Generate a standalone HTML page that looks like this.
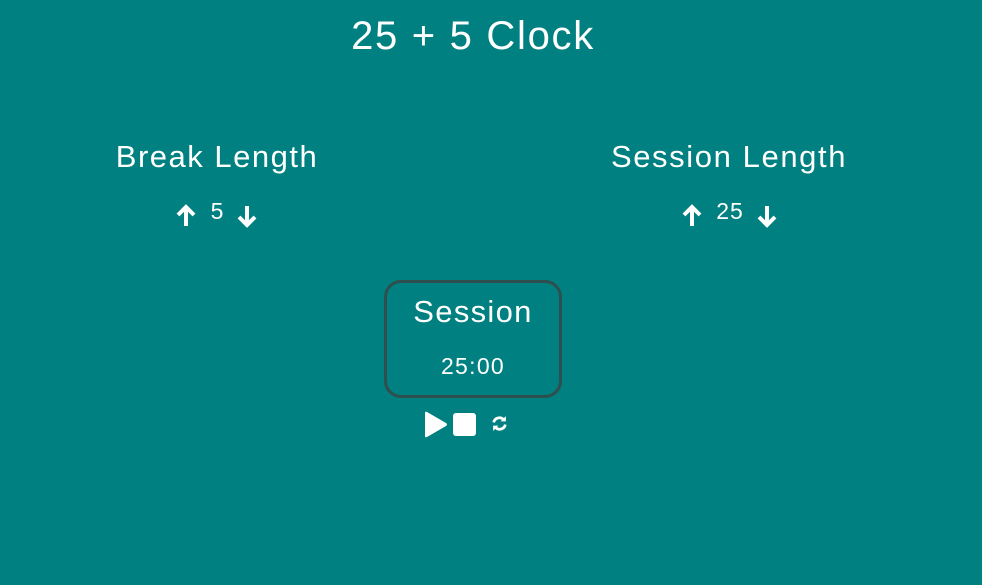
<!DOCTYPE html>
<html><head><style>
body{margin:0;width:982px;height:585px;background:#008080;font-family:"Liberation Sans",sans-serif;color:#fff;position:relative;overflow:hidden}
.t{position:absolute;white-space:nowrap;text-align:center}
svg{position:absolute}
</style></head><body>
<div class="t" style="left:323px;width:300px;top:14px;font-size:40px;letter-spacing:1.7px">25 + 5 Clock</div>
<div class="t" style="left:67px;width:300px;top:139px;font-size:31px;letter-spacing:1.5px">Break Length</div>
<div class="t" style="left:579px;width:300px;top:139px;font-size:31px;letter-spacing:1.6px">Session Length</div>
<svg style="left:175px;top:204px" width="22" height="24" viewBox="0 0 22 24"><path d="M11 22V4M3 11l8-8 8 8" stroke="#fff" stroke-width="4" fill="none"/></svg>
<div class="t" style="left:200px;width:34px;top:198px;font-size:23px">5</div>
<svg style="left:236px;top:204px" width="22" height="24" viewBox="0 0 22 24"><path d="M11 2v18M3 13l8 8 8-8" stroke="#fff" stroke-width="4" fill="none"/></svg>
<svg style="left:681px;top:204px" width="22" height="24" viewBox="0 0 22 24"><path d="M11 22V4M3 11l8-8 8 8" stroke="#fff" stroke-width="4" fill="none"/></svg>
<div class="t" style="left:709px;width:42px;top:198px;font-size:23px;letter-spacing:1px">25</div>
<svg style="left:756px;top:204px" width="22" height="24" viewBox="0 0 22 24"><path d="M11 2v18M3 13l8 8 8-8" stroke="#fff" stroke-width="4" fill="none"/></svg>
<div style="position:absolute;left:384px;top:280px;width:172px;height:112px;border:3px solid #2f4f4f;border-radius:17px"></div>
<div class="t" style="left:373px;width:200px;top:294px;font-size:31px;letter-spacing:1.3px">Session</div>
<div class="t" style="left:373px;width:200px;top:353px;font-size:23px;letter-spacing:1.3px">25:00</div>
<svg style="left:424px;top:411px" width="24" height="27" viewBox="0 0 24 27"><path d="M1 2Q1 0 3 1L22 12Q24 13.5 22 15L3 26Q1 27 1 25Z" fill="#fff"/></svg>
<div style="position:absolute;left:453px;top:413px;width:23px;height:23px;background:#fff;border-radius:3px"></div>
<svg style="left:491px;top:415px" width="17" height="17" viewBox="0 0 16 16"><path d="M2.5 7A5.5 5.5 0 0 1 12 4.5" stroke="#fff" stroke-width="2.6" fill="none"/><path d="M9 6h5V1z" fill="#fff"/><path d="M13.5 9A5.5 5.5 0 0 1 4 11.5" stroke="#fff" stroke-width="2.6" fill="none"/><path d="M7 10H2v5z" fill="#fff"/></svg>
</body></html>
